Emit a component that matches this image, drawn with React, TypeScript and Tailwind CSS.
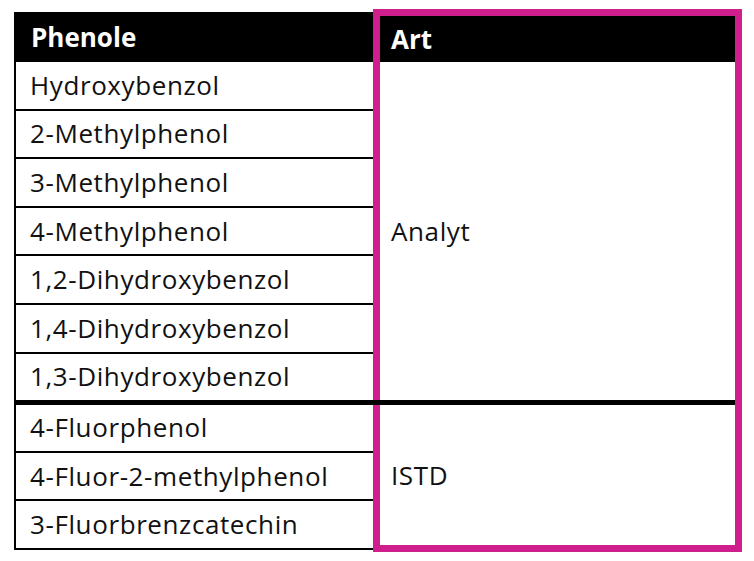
const analyten = [
  'Hydroxybenzol',
  '2-Methylphenol',
  '3-Methylphenol',
  '4-Methylphenol',
  '1,2-Dihydroxybenzol',
  '1,4-Dihydroxybenzol',
  '1,3-Dihydroxybenzol',
];

const standards = ['4-Fluorphenol', '4-Fluor-2-methylphenol', '3-Fluorbrenzcatechin'];

export default function App() {
  return (
    <div className="min-h-screen bg-white pl-[14px] pt-[9px] text-[26px] tracking-[0.6px] text-[#111] [font-family:'Open_Sans',sans-serif]">
      <div className="flex">
        {/* linke Spalte */}
        <div className="mt-[3px] flex w-[359px] flex-col">
          <div className="flex h-[50px] items-center bg-black pl-[17px] font-bold tracking-normal text-white">Phenole</div>
          <div className="border-l-2 border-black">
            {analyten.map((name, i) => (
              <div
                key={name}
                className={
                  i === analyten.length - 1
                    ? 'relative z-10 -mr-[8px] flex h-[51px] items-center border-b-[5px] border-black pb-[1px] pl-[14px]'
                    : 'flex h-[48.6px] items-center border-b-2 border-black pl-[14px]'
                }
              >
                {name}
              </div>
            ))}
            {standards.map((name) => (
              <div key={name} className="flex h-[48.4px] items-center border-b-2 border-black pl-[14px]">
                {name}
              </div>
            ))}
          </div>
        </div>

        {/* rechte Spalte mit Rahmen */}
        <div className="flex h-[543px] w-[369px] flex-col border-[7px] border-[#cf1f8c]">
          <div className="flex h-[46px] shrink-0 items-center bg-black pl-[11px] font-bold tracking-normal text-white">Art</div>
          <div className="flex h-[343px] shrink-0 items-center border-b-[5px] border-black pl-[11px]">Analyt</div>
          <div className="flex flex-1 items-center pl-[11px]">ISTD</div>
        </div>
      </div>
    </div>
  );
}
